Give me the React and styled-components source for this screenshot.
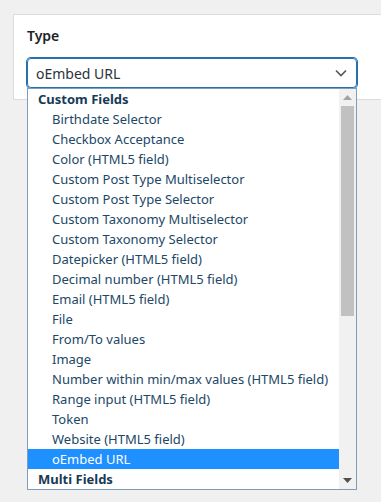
import styled, { createGlobalStyle } from "styled-components";

const GlobalStyle = createGlobalStyle`
  html, body {
    margin: 0;
    padding: 0;
    background: #f0f0f1;
    font-family: "Noto Sans", "Open Sans", sans-serif;
  }
`;

// options shown in the open list
const groups = [
  {
    label: "Custom Fields",
    options: [
      "Birthdate Selector",
      "Checkbox Acceptance",
      "Color (HTML5 field)",
      "Custom Post Type Multiselector",
      "Custom Post Type Selector",
      "Custom Taxonomy Multiselector",
      "Custom Taxonomy Selector",
      "Datepicker (HTML5 field)",
      "Decimal number (HTML5 field)",
      "Email (HTML5 field)",
      "File",
      "From/To values",
      "Image",
      "Number within min/max values (HTML5 field)",
      "Range input (HTML5 field)",
      "Token",
      "Website (HTML5 field)",
      "oEmbed URL",
    ],
  },
  { label: "Multi Fields", options: [] },
];

const selected = "oEmbed URL";

const Page = styled.div`
  padding: 14px 0 0 13px;
  overflow: hidden;
  height: 502px;
  box-sizing: border-box;
`;

const Card = styled.div`
  width: 420px;
  height: 86px;
  box-sizing: border-box;
  background: #fff;
  border: 1px solid #dcdcde;
  padding: 11px 13px 0;
`;

const Label = styled.div`
  font-size: 14px;
  font-weight: 600;
  line-height: 20px;
  color: #1d2327;
  margin-bottom: 12px;
`;

const SelectWrap = styled.div`
  position: relative;
  width: 330px;
`;

const SelectBox = styled.div`
  height: 30px;
  box-sizing: border-box;
  border: 1px solid #2271b1;
  box-shadow: 0 0 0 1px #2271b1;
  border-radius: 4px;
  display: flex;
  align-items: center;
  justify-content: space-between;
  padding: 0 8px 0 8px;
  font-size: 14px;
  color: #2c3338;
`;

const Chevron = () => (
  <svg width="14" height="14" viewBox="0 0 14 14">
    <path d="M2 4.5 L7 9.5 L12 4.5" fill="none" stroke="#50575e" strokeWidth="1.6" />
  </svg>
);

const List = styled.div`
  position: absolute;
  top: 30px;
  left: 0;
  width: 330px;
  height: 402px;
  box-sizing: border-box;
  background: #fff;
  border: 1px solid #7f9db9;
  display: flex;
`;

const Options = styled.div`
  flex: 1;
  overflow: hidden;
`;

const Row = styled.div`
  height: 20px;
  line-height: 20px;
  font-size: 13px;
  white-space: nowrap;
  padding-left: ${(p) => (p.$group ? "10px" : "24px")};
  font-weight: ${(p) => (p.$group ? 700 : 400)};
  color: ${(p) => (p.$active ? "#fff" : p.$group ? "#173a55" : "#214766")};
  background: ${(p) => (p.$active ? "#1e90ff" : "transparent")};
`;

const Scrollbar = styled.div`
  width: 17px;
  background: #f1f1f1;
  display: flex;
  flex-direction: column;
  align-items: center;
`;

const Arrow = styled.div`
  height: 17px;
  width: 17px;
  display: flex;
  align-items: center;
  justify-content: center;
`;

const Thumb = styled.div`
  width: 13px;
  height: 210px;
  background: #c1c1c1;
`;

const Spacer = styled.div`
  flex: 1;
`;

const Tri = ({ up }) => (
  <svg width="9" height="5" viewBox="0 0 9 5">
    <path d={up ? "M0 5 L4.5 0 L9 5 Z" : "M0 0 L4.5 5 L9 0 Z"} fill={up ? "#a3a3a3" : "#505050"} />
  </svg>
);

export default function App() {
  return (
    <>
      <GlobalStyle />
      <Page>
        <Card>
          <Label>Type</Label>
          <SelectWrap>
            <SelectBox>
              <span>{selected}</span>
              <Chevron />
            </SelectBox>
            <List>
              <Options>
                {groups.map((g) => (
                  <div key={g.label}>
                    <Row $group>{g.label}</Row>
                    {g.options.map((o) => (
                      <Row key={o} $active={o === selected}>
                        {o}
                      </Row>
                    ))}
                  </div>
                ))}
              </Options>
              <Scrollbar>
                <Arrow>
                  <Tri up />
                </Arrow>
                <Thumb />
                <Spacer />
                <Arrow>
                  <Tri />
                </Arrow>
              </Scrollbar>
            </List>
          </SelectWrap>
        </Card>
      </Page>
    </>
  );
}
